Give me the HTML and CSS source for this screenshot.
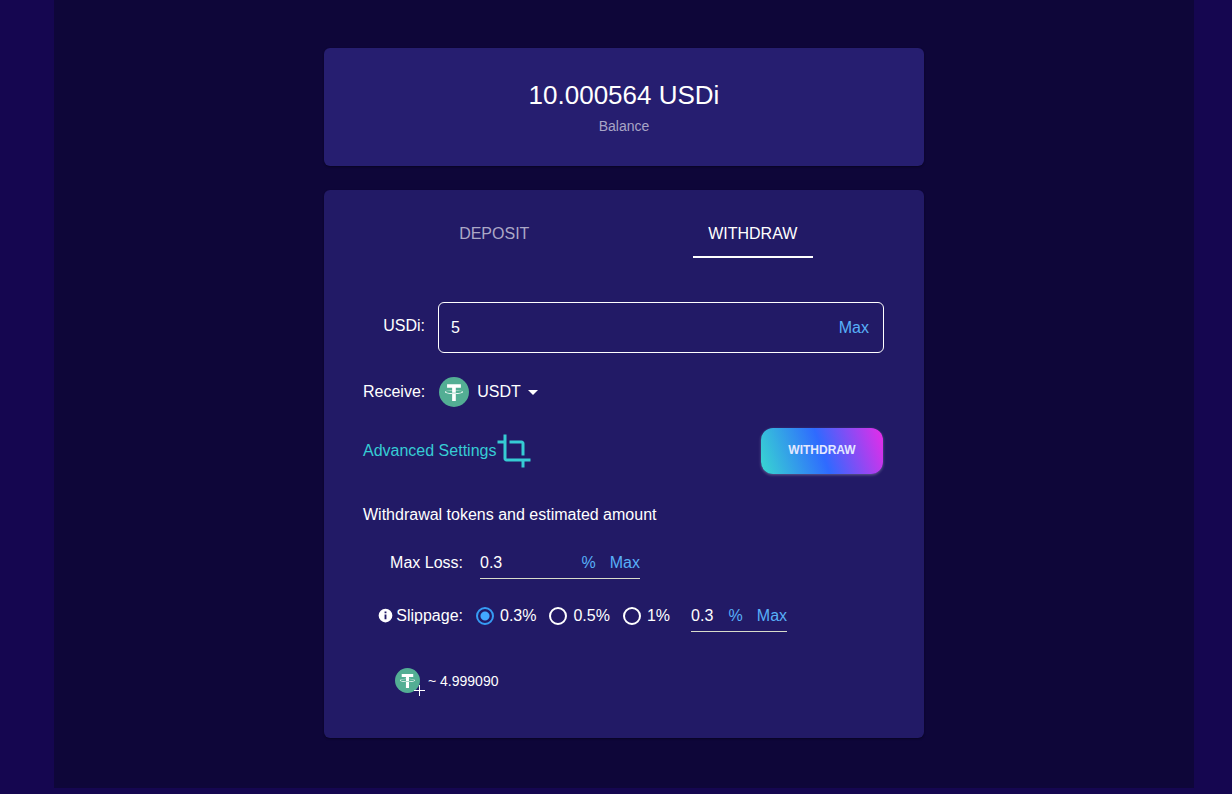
FILE: index.html
```html
<!DOCTYPE html>
<html lang="en">
<head>
<meta charset="utf-8">
<title>USDi Withdraw</title>
<meta name="viewport" content="width=device-width, initial-scale=1">
<link rel="stylesheet" href="styles.css">
</head>
<body class="page">
<svg class="sprite" aria-hidden="true">
  <symbol id="tether" viewBox="0 0 32 32">
    <circle cx="16" cy="16" r="16" fill="#53ae94"/>
    <path fill="#fff" d="M17.922 17.383v-.002c-.11.008-.677.042-1.942.042-1.01 0-1.721-.03-1.971-.042v.003c-3.888-.171-6.79-.848-6.79-1.658 0-.809 2.902-1.486 6.79-1.66v2.644c.254.018.982.061 1.988.061 1.207 0 1.812-.05 1.925-.06v-2.643c3.88.173 6.775.85 6.775 1.658 0 .81-2.895 1.485-6.775 1.657m0-3.59v-2.366h5.414V7.819H8.595v3.608h5.414v2.365c-4.4.202-7.709 1.074-7.709 2.118 0 1.044 3.309 1.915 7.709 2.118v7.582h3.913v-7.584c4.393-.202 7.694-1.073 7.694-2.116 0-1.043-3.301-1.914-7.694-2.117"/>
  </symbol>
</svg>
<main class="shell">
  <section class="card balance">
    <p class="balance-value">10.000564 USDi</p>
    <p class="balance-label">Balance</p>
  </section>

  <form class="card form">
    <div class="tabs" role="tablist">
      <button class="tab" type="button" role="tab" aria-selected="false">DEPOSIT</button>
      <button class="tab tab-active" type="button" role="tab" aria-selected="true">WITHDRAW</button>
    </div>

    <div class="amount-row">
      <label class="amount-label" for="amount">USDi:</label>
      <div class="amount-box">
        <input class="field" id="amount" type="text" inputmode="decimal" value="5">
        <button class="max" type="button">Max</button>
      </div>
    </div>

    <div class="receive-row">
      <label class="receive-label" for="token">Receive:</label>
      <div class="picker">
        <svg class="token"><use href="#tether"/></svg>
        <select class="token-select" id="token"><option>USDT</option></select>
        <svg class="caret" viewBox="0 0 10 5"><path d="M0 0h10L5 5z" fill="#fff"/></svg>
      </div>
    </div>

    <div class="action-row">
      <button class="advanced" type="button">Advanced Settings
        <svg class="crop" viewBox="0 0 24 24"><path fill="currentColor" d="M17 15h2V7c0-1.100-.9-2-2-2H9v2h8v8zM7 17V1H5v4H1v2h4v10c0 1.100.9 2 2 2h10v4h2v-4h4v-2H7z"/></svg>
      </button>
      <button class="submit" type="submit">WITHDRAW</button>
    </div>

    <h2 class="heading">Withdrawal tokens and estimated amount</h2>

    <div class="setting">
      <label class="setting-label" for="loss">Max Loss:</label>
      <div class="line-box line-wide">
        <input class="field" id="loss" type="text" value="0.3">
        <span class="unit">%</span>
        <button class="max" type="button">Max</button>
      </div>
    </div>

    <div class="setting setting-slippage">
      <label class="setting-label" for="slippage">
        <svg class="info" viewBox="0 0 24 24"><path fill="#fff" d="M12 1a11 11 0 1 0 0 22 11 11 0 0 0 0-22zm1.500 17h-3v-7.500h3V18zm0-9.500h-3v-3h3v3z"/></svg>
        Slippage:
      </label>
      <div class="radios">
        <label class="choice"><input class="radio" type="radio" name="slip" checked>0.3%</label>
        <label class="choice"><input class="radio" type="radio" name="slip">0.5%</label>
        <label class="choice"><input class="radio" type="radio" name="slip">1%</label>
      </div>
      <div class="line-box line-narrow">
        <input class="field" id="slippage" type="text" value="0.3">
        <span class="unit">%</span>
        <button class="max" type="button">Max</button>
      </div>
    </div>

    <div class="estimate">
      <span class="estimate-icon">
        <svg class="token-small"><use href="#tether"/></svg>
        <svg class="plus" viewBox="0 0 11 11"><path d="M5 0h1v5h5v1H6v5H5V6H0V5h5z" fill="#fff"/></svg>
      </span>
      <span>~ 4.999090</span>
    </div>
  </form>
</main>
</body>
</html>
```

FILE: styles.css
```css
* { box-sizing: border-box; }

.page {
  margin: 0;
  padding: 0 0 6px 16px;
  background: #150650;
  color: #fff;
  font: 16px/20px "Liberation Sans", Arial, sans-serif;
}

.sprite { position: absolute; width: 0; height: 0; }

button, input, select {
  margin: 0;
  padding: 0;
  border: 0;
  background: none;
  color: inherit;
  font: inherit;
}
button { cursor: pointer; }

.shell {
  display: flex;
  flex-direction: column;
  align-items: center;
  gap: 24px;
  max-width: 1140px;
  min-height: calc(100vh - 6px);
  margin: 0 auto;
  padding: 48px 16px;
  background: #0e0639;
}

.card {
  width: 100%;
  max-width: 600px;
  border-radius: 6px;
  box-shadow: 0 1px 2px rgba(0, 0, 0, 0.4);
}

.balance {
  padding: 31px 24px 30px;
  background: #261e70;
  text-align: center;
}
.balance-value { margin: 0; font-size: 26px; line-height: 32px; }
.balance-label { margin: 5px 0 0; font-size: 14px; color: #a8a5c6; }

.form { padding: 20px 40px 44px 39px; background: #221a66; }

.tabs { display: flex; justify-content: space-around; margin: 0 2px 44px; }
.tab {
  width: 120px;
  height: 48px;
  padding-top: 2px;
  border-bottom: 2px solid transparent;
  color: #aca8c6;
}
.tab-active { border-color: #fff; color: #fff; }

.amount-row { display: flex; gap: 13px; }
.amount-label { width: 62px; line-height: 48px; text-align: right; }
.amount-box {
  display: flex;
  align-items: center;
  flex: 1;
  min-width: 0;
  height: 51px;
  padding: 0 14px 0 12px;
  border: 1px solid #fff;
  border-radius: 6px;
}
.field { flex: 1; min-width: 0; width: 0; height: 32px; outline: 0; }
.max, .unit { color: #58b0f8; }

.receive-row { display: flex; align-items: center; gap: 14px; margin-top: 24px; }
.picker { display: flex; align-items: center; }
.token { width: 30px; height: 30px; margin-right: 8px; }
.token-select { appearance: none; margin-right: 7px; }
.caret { width: 10px; height: 5px; }

.action-row {
  display: flex;
  align-items: center;
  justify-content: space-between;
  margin: 21px 1px 0 0;
}
.advanced { display: flex; align-items: center; color: #36ccd4; }
.crop { width: 36px; height: 36px; }
.submit {
  width: 122px;
  height: 46px;
  padding-bottom: 2px;
  border-radius: 12px;
  background: linear-gradient(71deg, #38d8d0 0%, #2f6aff 50%, #e82be8 100%);
  box-shadow: 0 1px 3px rgba(255, 255, 255, 0.3);
  color: #e4e8ff;
  font-size: 12px;
  font-weight: 700;
}

.heading { margin: 31px 0 21px; font-size: 16px; font-weight: 400; }

.setting { display: flex; align-items: center; gap: 17px; }
.setting-slippage { margin-top: 20px; }
.setting-label {
  display: flex;
  align-items: center;
  justify-content: flex-end;
  gap: 3px;
  width: 100px;
}
.info { width: 15px; height: 15px; }
.line-box {
  display: flex;
  align-items: center;
  gap: 14px;
  height: 33px;
  padding-top: 2px;
  border-bottom: 1px solid #d8dccb;
}
.line-wide { width: 160px; }
.line-narrow { width: 96px; }
.line-narrow .field { width: 24px; }

.radios { display: flex; margin-left: -4px; }
.choice { display: flex; align-items: center; gap: 6px; margin-right: 13px; }
.choice:last-child { margin-right: 4px; }
.radio {
  appearance: none;
  width: 18px;
  height: 18px;
  border: 2px solid #fff;
  border-radius: 50%;
}
.radio:checked {
  border-color: #369cf4;
  background: radial-gradient(circle, #42a8ff 4px, transparent 5px);
}

.estimate {
  display: flex;
  align-items: center;
  gap: 8px;
  margin: 36px 0 0 32px;
  font-size: 14px;
}
.estimate-icon { position: relative; height: 26px; }
.token-small { display: block; width: 25px; height: 25px; }
.plus { position: absolute; right: -5px; bottom: -2px; width: 11px; height: 11px; }

@media (max-width: 600px) {
  .form { padding-left: 16px; padding-right: 16px; }
  .setting, .radios, .action-row { flex-wrap: wrap; }
}
```
